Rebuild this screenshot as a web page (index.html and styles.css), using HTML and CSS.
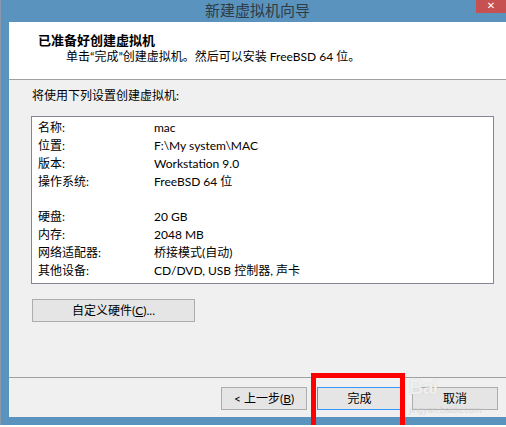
FILE: index.html
```html
<!DOCTYPE html>
<html lang="zh-CN">
<head>
<meta charset="utf-8">
<title>新建虚拟机向导</title>
<link rel="stylesheet" href="styles.css">
</head>
<body>
<div class="window">
  <div class="titlebar">
    <span class="title">新建虚拟机向导</span>
    <span class="close">✕</span>
  </div>
  <div class="client">
    <div class="header">
      <div class="h-title">已准备好创建虚拟机</div>
      <div class="h-sub">单击“完成”创建虚拟机。然后可以安装 FreeBSD 64 位。</div>
    </div>
    <div class="body">
      <div class="intro">将使用下列设置创建虚拟机:</div>
      <div class="summary">
        <div class="row"><span class="k">名称:</span><span class="v">mac</span></div>
        <div class="row"><span class="k">位置:</span><span class="v">F:\My system\MAC</span></div>
        <div class="row"><span class="k">版本:</span><span class="v">Workstation 9.0</span></div>
        <div class="row"><span class="k">操作系统:</span><span class="v">FreeBSD 64 位</span></div>
        <div class="spacer"></div>
        <div class="row"><span class="k">硬盘:</span><span class="v">20 GB</span></div>
        <div class="row"><span class="k">内存:</span><span class="v">2048 MB</span></div>
        <div class="row"><span class="k">网络适配器:</span><span class="v">桥接模式(自动)</span></div>
        <div class="row"><span class="k">其他设备:</span><span class="v">CD/DVD, USB 控制器, 声卡</span></div>
      </div>
      <button class="btn custom" type="button">自定义硬件(<u>C</u>)...</button>
    </div>
    <div class="footer">
      <button class="btn" type="button">&lt; 上一步(<u>B</u>)</button>
      <button class="btn default" type="button">完成</button>
      <button class="btn" type="button">取消</button>
    </div>
  </div>
  <div class="highlight"></div>
  <div class="watermark">
    <div class="wm-logo">Bai</div>
    <div class="wm-url">jingyan.baidu.com</div>
  </div>
</div>
</body>
</html>
```

FILE: styles.css
```css
html, body {
  margin: 0;
  padding: 0;
  background: #ffffff;
  overflow: hidden;
}
body {
  font-family: "Segoe UI", "Lato", "Noto Sans CJK SC", sans-serif;
  font-size: 12px;
  color: #000;
}
.window {
  position: relative;
  width: 506px;
  height: 425px;
  background: #5a93be;
  padding-left: 8px;
  box-sizing: border-box;
  display: flex;
  flex-direction: column;
  border-left: 1px solid #8a9aaa;
}
.titlebar {
  height: 22px;
  flex: none;
  display: flex;
  justify-content: center;
  position: relative;
}
.title {
  font-family: "Noto Sans CJK SC", sans-serif;
  font-size: 15px;
  line-height: 20px;
  color: #2f3b45;
}
.close {
  position: absolute;
  top: 0;
  right: 0;
  width: 30px;
  height: 13px;
  background: #c75050;
  color: #fff;
  font-size: 10px;
  font-weight: bold;
  line-height: 12px;
  text-align: center;
  font-family: "DejaVu Sans", sans-serif;
}
.client {
  background: #f0f0f0;
  height: 395px;
  display: flex;
  flex-direction: column;
}
.header {
  background: #fff;
  border-bottom: 1px solid #a0a0a0;
  padding-top: 9px;
  box-sizing: border-box;
  height: 58px;
  flex: none;
}
.h-title {
  font-family: "Noto Sans CJK SC", sans-serif;
  font-weight: bold;
  font-size: 13px;
  line-height: 17px;
  padding-left: 29px;
}
.h-sub {
  font-size: 12px;
  line-height: 17px;
  padding-left: 57px;
}
.body {
  flex: 1;
  padding-top: 7px;
  box-sizing: border-box;
}
.intro {
  line-height: 18px;
  padding-left: 23px;
}
.summary {
  margin: 11px 0 0 22px;
  width: 463px;
  height: 168px;
  box-sizing: border-box;
  border: 1px solid #828790;
  background: #fff;
  padding: 2px 0 0 6px;
}
.row {
  display: flex;
  line-height: 18px;
  height: 18px;
}
.k {
  width: 116px;
  flex: none;
}
.spacer {
  height: 17px;
}
.btn {
  font-family: "Segoe UI", "Lato", "Noto Sans CJK SC", sans-serif;
  font-size: 12px;
  color: #000;
  background: #e5e5e5;
  border: 1px solid #adadad;
  height: 23px;
  padding: 0;
  margin: 0;
  box-sizing: border-box;
  line-height: 20px;
}
.custom {
  display: block;
  margin: 15px 0 0 23px;
  width: 163px;
}
.footer {
  flex: none;
  height: 40px;
  box-sizing: border-box;
  border-top: 1px solid #a0a0a0;
  padding: 9px 8px 8px 0;
  display: flex;
  justify-content: flex-end;
}
.footer .btn {
  width: 86px;
  height: 23px;
  margin-left: 10px;
}
.footer .default {
  border-color: #3399ff;
  width: 85px;
}
.highlight {
  position: absolute;
  left: 310px;
  top: 373px;
  width: 94px;
  height: 60px;
  box-sizing: border-box;
  border: 5px solid #ff0000;
}
.watermark {
  position: absolute;
  left: 408px;
  top: 377px;
  font-family: "Liberation Sans", sans-serif;
  pointer-events: none;
}
.wm-logo {
  font-size: 20px;
  font-weight: bold;
  line-height: 20px;
  letter-spacing: -1px;
  color: rgba(255, 255, 255, 0.8);
  text-shadow: 0 0 1px rgba(150, 150, 150, 0.6);
}
.wm-url {
  margin-top: 8px;
  font-size: 9px;
  line-height: 10px;
  color: rgba(200, 200, 200, 0.6);
}
```
